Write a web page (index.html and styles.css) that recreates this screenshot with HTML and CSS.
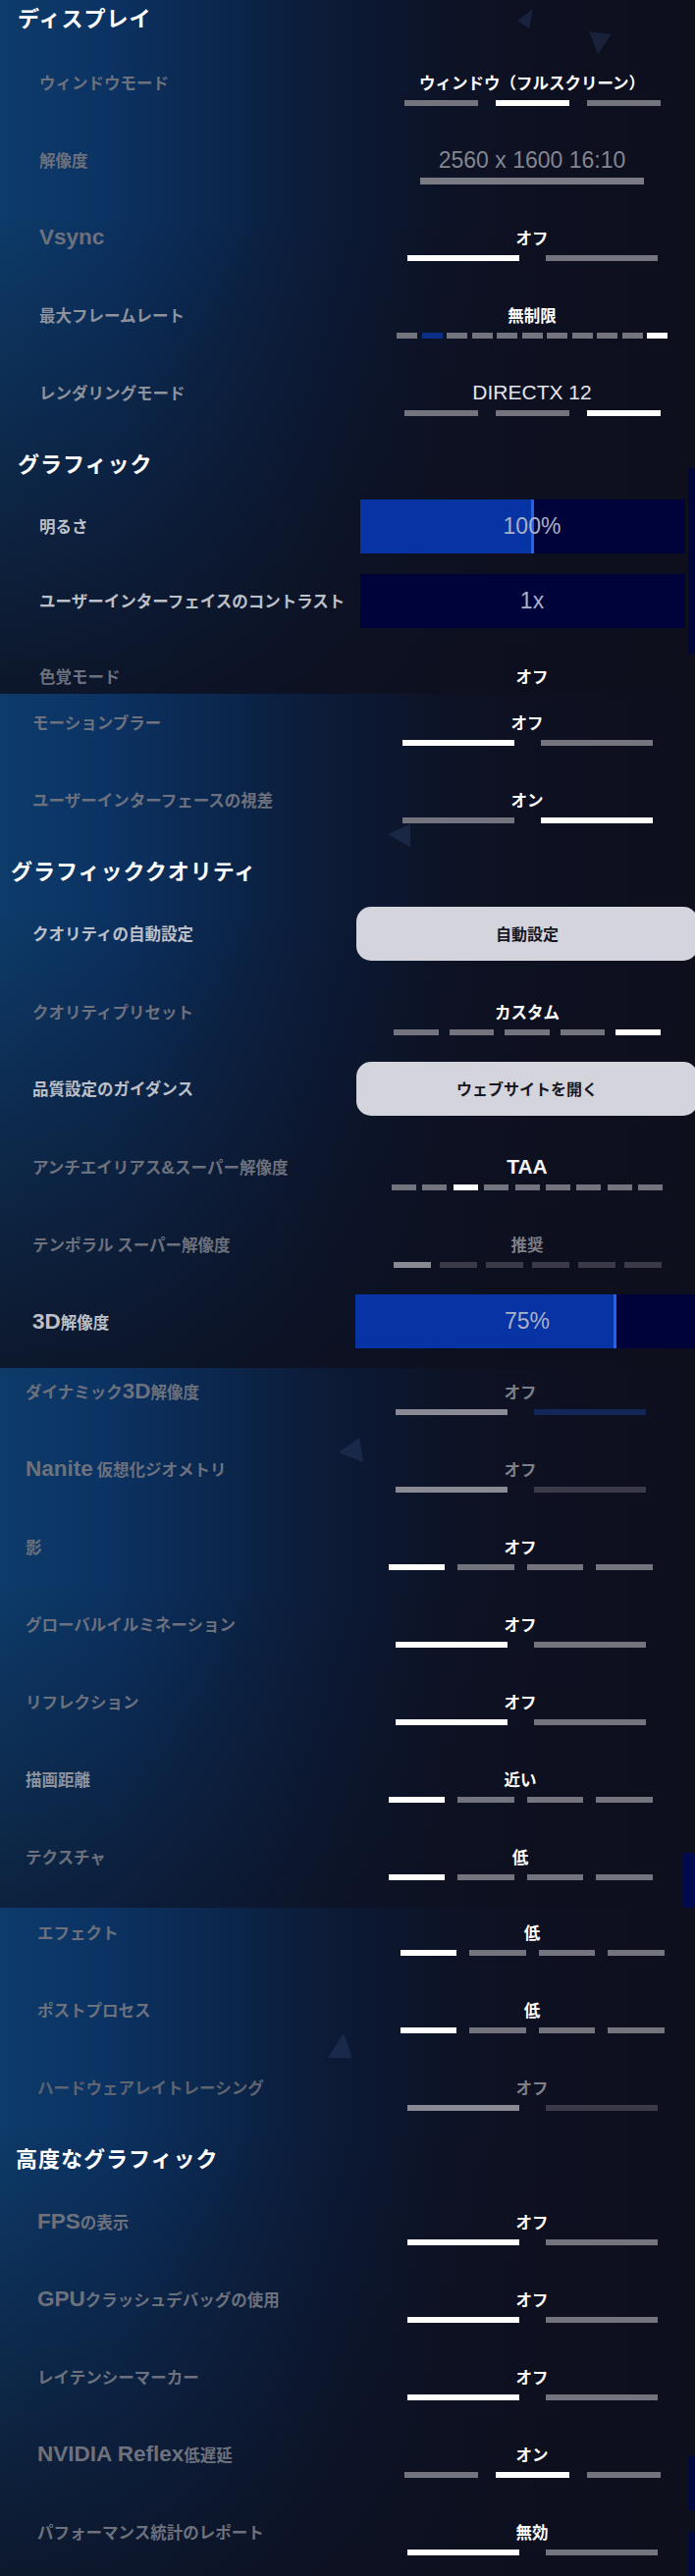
FILE: index.html
```html
<!DOCTYPE html>
<html lang="ja">
<head>
<meta charset="utf-8">
<title>設定</title>
<link rel="stylesheet" href="styles.css">
</head>
<body>
<div class="page">

<section class="seg seg-a">
  <svg class="deco d1" width="20" height="22" viewBox="0 0 20 22"><polygon points="16,0 0,12 12,20"/></svg>
  <svg class="deco d2" width="24" height="24" viewBox="0 0 24 24"><polygon points="0,0 23,3 9,23"/></svg>
  <h2 class="title first">ディスプレイ</h2>
  <div class="row">
    <div class="label dim">ウィンドウモード</div>
    <div class="ctrl"><div class="val">ウィンドウ（フルスクリーン）</div>
      <div class="bars b3"><i></i><i class="on"></i><i></i></div></div>
  </div>
  <div class="row">
    <div class="label dim">解像度</div>
    <div class="ctrl"><div class="val res">2560 x 1600 16:10</div>
      <div class="bars b1"><i></i></div></div>
  </div>
  <div class="row">
    <div class="label dim"><span class="lat">Vsync</span></div>
    <div class="ctrl"><div class="val">オフ</div>
      <div class="bars b2"><i class="on"></i><i></i></div></div>
  </div>
  <div class="row">
    <div class="label mid">最大フレームレート</div>
    <div class="ctrl"><div class="val">無制限</div>
      <div class="bars b11"><i></i><i class="blue"></i><i></i><i></i><i></i><i></i><i></i><i></i><i></i><i></i><i class="on"></i></div></div>
  </div>
  <div class="row">
    <div class="label mid">レンダリングモード</div>
    <div class="ctrl"><div class="val latv">DIRECTX 12</div>
      <div class="bars b3"><i></i><i></i><i class="on"></i></div></div>
  </div>
  <h2 class="title">グラフィック</h2>
  <div class="row slider-row">
    <div class="label bright">明るさ</div>
    <div class="slider" style="--fill:50.5%"><span class="sval">100%</span></div>
  </div>
  <div class="row slider-row">
    <div class="label bright">ユーザーインターフェイスのコントラスト</div>
    <div class="slider" style="--fill:0%"><span class="sval">1x</span></div>
  </div>
  <div class="row">
    <div class="label dim">色覚モード</div>
    <div class="ctrl"><div class="val">オフ</div>
      <div class="bars b2"><i class="on"></i><i></i></div></div>
  </div>
  <div class="scroll s1"></div>
</section>

<section class="seg seg-b">
  <svg class="deco d3" width="24" height="24" viewBox="0 0 24 24"><polygon points="0,10 23,0 23,23"/></svg>
  <div class="row shift-b">
    <div class="label dim">モーションブラー</div>
    <div class="ctrl"><div class="val">オフ</div>
      <div class="bars b2"><i class="on"></i><i></i></div></div>
  </div>
  <div class="row">
    <div class="label dim">ユーザーインターフェースの視差</div>
    <div class="ctrl"><div class="val">オン</div>
      <div class="bars b2"><i></i><i class="on"></i></div></div>
  </div>
  <h2 class="title">グラフィッククオリティ</h2>
  <div class="row btn-row">
    <div class="label bright">クオリティの自動設定</div>
    <div class="btn">自動設定</div>
  </div>
  <div class="row">
    <div class="label dim">クオリティプリセット</div>
    <div class="ctrl"><div class="val">カスタム</div>
      <div class="bars b5"><i></i><i></i><i></i><i></i><i class="on"></i></div></div>
  </div>
  <div class="row btn-row">
    <div class="label bright">品質設定のガイダンス</div>
    <div class="btn">ウェブサイトを開く</div>
  </div>
  <div class="row">
    <div class="label dim">アンチエイリアス<span class="amp">&amp;</span>スーパー解像度</div>
    <div class="ctrl"><div class="val latb">TAA</div>
      <div class="bars b9"><i></i><i></i><i class="on"></i><i></i><i></i><i></i><i></i><i></i><i></i></div></div>
  </div>
  <div class="row">
    <div class="label dim">テンポラル スーパー解像度</div>
    <div class="ctrl"><div class="val off">推奨</div>
      <div class="bars b6 dis"><i class="lit"></i><i></i><i></i><i></i><i></i><i></i></div></div>
  </div>
  <div class="row slider-row">
    <div class="label bright"><span class="lat">3D</span>解像度</div>
    <div class="slider" style="--fill:76%"><span class="sval">75%</span></div>
  </div>
</section>

<section class="seg seg-c">
  <svg class="deco d4" width="26" height="26" viewBox="0 0 26 26"><polygon points="0,15 21,0 25,25"/></svg>
  <div class="row shift-c">
    <div class="label dim">ダイナミック<span class="lat">3D</span>解像度</div>
    <div class="ctrl"><div class="val off">オフ</div>
      <div class="bars b2 dis"><i class="lit"></i><i class="navy"></i></div></div>
  </div>
  <div class="row">
    <div class="label dim"><span class="lat">Nanite</span> 仮想化ジオメトリ</div>
    <div class="ctrl"><div class="val off">オフ</div>
      <div class="bars b2 dis"><i class="lit"></i><i></i></div></div>
  </div>
  <div class="row">
    <div class="label dim">影</div>
    <div class="ctrl"><div class="val">オフ</div>
      <div class="bars b4"><i class="on"></i><i></i><i></i><i></i></div></div>
  </div>
  <div class="row">
    <div class="label dim">グローバルイルミネーション</div>
    <div class="ctrl"><div class="val">オフ</div>
      <div class="bars b2"><i class="on"></i><i></i></div></div>
  </div>
  <div class="row">
    <div class="label dim">リフレクション</div>
    <div class="ctrl"><div class="val">オフ</div>
      <div class="bars b2"><i class="on"></i><i></i></div></div>
  </div>
  <div class="row">
    <div class="label mid">描画距離</div>
    <div class="ctrl"><div class="val">近い</div>
      <div class="bars b4"><i class="on"></i><i></i><i></i><i></i></div></div>
  </div>
  <div class="row">
    <div class="label dim">テクスチャ</div>
    <div class="ctrl"><div class="val">低</div>
      <div class="bars b4"><i class="on"></i><i></i><i></i><i></i></div></div>
  </div>
  <div class="scroll s2"></div>
</section>

<section class="seg seg-d">
  <svg class="deco d5" width="26" height="26" viewBox="0 0 26 26"><polygon points="0,25 16,0 25,25"/></svg>
  <div class="row shift-d">
    <div class="label dim">エフェクト</div>
    <div class="ctrl"><div class="val">低</div>
      <div class="bars b4"><i class="on"></i><i></i><i></i><i></i></div></div>
  </div>
  <div class="row">
    <div class="label dim">ポストプロセス</div>
    <div class="ctrl"><div class="val">低</div>
      <div class="bars b4"><i class="on"></i><i></i><i></i><i></i></div></div>
  </div>
  <div class="row">
    <div class="label dimmer">ハードウェアレイトレーシング</div>
    <div class="ctrl"><div class="val off">オフ</div>
      <div class="bars b2 dis"><i class="lit"></i><i></i></div></div>
  </div>
  <h2 class="title">高度なグラフィック</h2>
  <div class="row">
    <div class="label dim"><span class="lat">FPS</span>の表示</div>
    <div class="ctrl"><div class="val">オフ</div>
      <div class="bars b2"><i class="on"></i><i></i></div></div>
  </div>
  <div class="row">
    <div class="label dim"><span class="lat">GPU</span>クラッシュデバッグの使用</div>
    <div class="ctrl"><div class="val">オフ</div>
      <div class="bars b2"><i class="on"></i><i></i></div></div>
  </div>
  <div class="row">
    <div class="label dim">レイテンシーマーカー</div>
    <div class="ctrl"><div class="val">オフ</div>
      <div class="bars b2"><i class="on"></i><i></i></div></div>
  </div>
  <div class="row">
    <div class="label dim"><span class="lat">NVIDIA Reflex</span>低遅延</div>
    <div class="ctrl"><div class="val">オン</div>
      <div class="bars b3"><i></i><i class="on"></i><i></i></div></div>
  </div>
  <div class="row">
    <div class="label dim">パフォーマンス統計のレポート</div>
    <div class="ctrl"><div class="val">無効</div>
      <div class="bars b2"><i class="on"></i><i></i></div></div>
  </div>
  <div class="scroll s3"></div>
  <div class="scroll s4"></div>
</section>

</div>
</body>
</html>
```

FILE: styles.css
```css
* { box-sizing: border-box; }
html, body { margin: 0; padding: 0; background: #0d0f1e; }
body {
  width: 708px;
  overflow: hidden;
  font-family: "Noto Sans CJK JP", "Noto Sans", sans-serif;
  color: #fff;
}
.page { width: 708px; }

.seg {
  position: relative;
  overflow: hidden;
  --lc: 326px;
  background:
    linear-gradient(180deg, rgba(13,15,29,0) 0px, rgba(13,15,29,0) 220px, rgba(13,15,29,0.82) 700px),
    linear-gradient(90deg, #0d3b6a 0%, #0b3262 16%, #0b264c 32%, #0c1a36 48%, #0d1326 64%, #0d1020 80%, #0d0f1d 100%);
}
.seg-a { height: 707px; padding-left: 18px; --lc: 324px; }
.seg-b { height: 687px; padding-left: 11px; }
.seg-c { height: 550px; padding-left: 4px; }
.seg-d { height: 681px; padding-left: 16px; }

.title {
  margin: 3px 0 21px 0;
  height: 34px;
  line-height: 34px;
  font-size: 22px;
  font-weight: 700;
  letter-spacing: 1px;
  color: #fff;
  white-space: nowrap;
}
.title.first { margin-top: 0; margin-bottom: 22px; }

.row {
  display: grid;
  grid-template-columns: var(--lc) 356px;
  height: 79px;
  padding-left: 22px;
  position: relative;
  z-index: 1;
}
.shift-b { margin-top: 1px; }
.shift-c { margin-top: -4px; }
.shift-d { margin-top: -3px; }

.label {
  margin-top: 16px;
  height: 24px;
  line-height: 24px;
  font-size: 16.5px;
  font-weight: 700;
  white-space: nowrap;
}
.label.dim { color: #6c717d; }
.label.dimmer { color: #5f6470; }
.label.mid { color: #8e929c; }
.label.bright { color: #bcc0c8; }
.lat {
  font-family: "Liberation Sans", Arial, sans-serif;
  font-size: 22.5px;
  font-weight: 700;
}
.amp {
  font-family: "Liberation Sans", Arial, sans-serif;
  font-size: 19px;
  font-weight: 700;
}

.ctrl { display: flex; flex-direction: column; align-items: center; }
.val {
  margin-top: 16px;
  height: 24px;
  line-height: 24px;
  font-size: 16.5px;
  font-weight: 700;
  color: #fff;
  white-space: nowrap;
}
.val.off { color: #7d7f89; }
.val.res {
  font-family: "Liberation Sans", Arial, sans-serif;
  font-weight: 400;
  font-size: 23px;
  color: #83858f;
}
.val.latv {
  font-family: "Liberation Sans", Arial, sans-serif;
  font-weight: 400;
  font-size: 21px;
  color: #e4e5ec;
}
.val.latb {
  font-family: "Liberation Sans", Arial, sans-serif;
  font-weight: 700;
  font-size: 21px;
  color: #f4f4f8;
}

.bars { display: flex; margin-top: 6px; height: 6px; }
.bars i { display: block; height: 6px; background: #74747f; }
.bars i.on { background: #ffffff; }
.bars i.blue { background: #0a2f86; }
.bars.dis i { background: #3a3a48; }
.bars.dis i.lit { background: #8a8a94; }
.bars.dis i.navy { background: #13265a; }
.b1 i { width: 228px; height: 7px; background: #7a7a84; }
.b2 { gap: 27px; } .b2 i { width: 114px; }
.b3 { gap: 18px; } .b3 i { width: 75px; }
.b4 { gap: 13px; } .b4 i { width: 57.5px; }
.b5 { gap: 11px; } .b5 i { width: 45.5px; }
.b6 { gap: 9px; } .b6 i { width: 38px; }
.b9 { gap: 6.4px; } .b9 i { width: 25px; }
.b11 { gap: 4.5px; } .b11 i { width: 21px; }

.slider-row { height: 76px; }
.slider-row .label { margin-top: 0; height: 55px; line-height: 55px; }
.slider {
  width: 350px;
  height: 55px;
  margin: 0 auto;
  background: linear-gradient(90deg,
    #0634a4 0, #0634a4 calc(var(--fill) - 3px),
    #2362ea calc(var(--fill) - 3px), #2362ea var(--fill),
    #00023a var(--fill), #00023a 100%);
}
.sval {
  display: block;
  text-align: center;
  line-height: 55px;
  font-family: "Liberation Sans", Arial, sans-serif;
  font-size: 23px;
  color: #aab0c6;
}

.btn-row .label { margin-top: 0; height: 55px; line-height: 55px; }
.btn {
  width: 348px;
  height: 55px;
  margin: 0 auto;
  background: #d3d4dc;
  border-radius: 15px;
  text-align: center;
  line-height: 55px;
  font-size: 16px;
  font-weight: 700;
  color: #17171f;
}

.scroll { position: absolute; z-index: 2; right: 0; background: #00063c; }
.s1 { top: 477px; width: 10px; height: 190px; border-left: 3px solid #0e0f1b; }
.s2 { top: 494px; width: 12px; height: 56px; background: #000a4c; }
.s3 { top: 559px; width: 6px; height: 55px; background: #000842; }
.s4 { top: 636px; width: 6px; height: 45px; background: #000842; }

.deco { position: absolute; z-index: 0; }
.deco polygon { fill: rgba(70, 100, 160, 0.22); }
.d1 { left: 527px; top: 9px; }
.d2 { left: 600px; top: 32px; }
.d3 { left: 395px; top: 133px; }
.d4 { left: 345px; top: 71px; }
.d5 { left: 334px; top: 128px; }
```
